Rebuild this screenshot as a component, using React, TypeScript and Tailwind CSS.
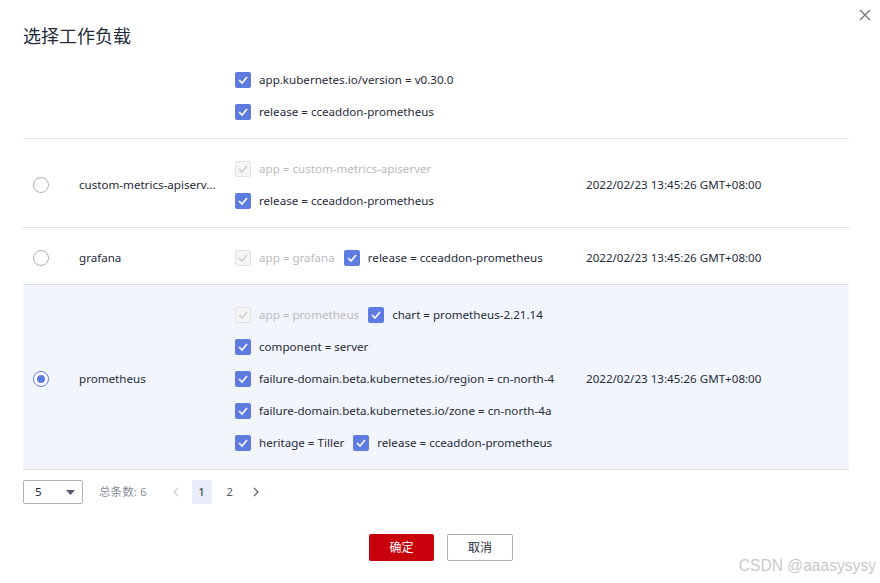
import React from "react";

type Label = { text: string; disabled?: boolean };

function Check({ disabled }: { disabled?: boolean }) {
  if (disabled) {
    return (
      <span className="flex h-4 w-4 shrink-0 items-center justify-center rounded-[2px] border border-[#dfe1e6] bg-[#f5f5f6]">
        <svg width="10" height="8" viewBox="0 0 10 8" fill="none">
          <path d="M1 4l3 3 5-6" stroke="#cbcdd2" strokeWidth="1.5" />
        </svg>
      </span>
    );
  }
  return (
    <span className="flex h-4 w-4 shrink-0 items-center justify-center rounded-[2px] bg-[#5e7ce0]">
      <svg width="10" height="8" viewBox="0 0 10 8" fill="none">
        <path d="M1 4l3 3 5-6" stroke="#ffffff" strokeWidth="1.6" />
      </svg>
    </span>
  );
}

function Tag({ l }: { l: Label }) {
  return (
    <span className="flex items-center gap-2 mr-[9px]">
      <Check disabled={l.disabled} />
      <span className={l.disabled ? "text-[#b8bac0]" : "text-[#252b3a]"}>{l.text}</span>
    </span>
  );
}

function Radio({ checked }: { checked?: boolean }) {
  if (checked) {
    return (
      <span className="flex h-4 w-4 items-center justify-center rounded-full border border-[#5e7ce0] bg-white">
        <span className="h-2 w-2 rounded-full bg-[#5e7ce0]" />
      </span>
    );
  }
  return <span className="block h-4 w-4 rounded-full border border-[#adb0b8] bg-white" />;
}

function Row({
  name,
  lines,
  checked,
  date,
  radio = true,
}: {
  name?: string;
  lines: Label[][];
  checked?: boolean;
  date?: string;
  radio?: boolean;
}) {
  return (
    <div className={`flex items-center border-b border-[#dfe1e6] pt-[14px] pb-[10px] ${checked ? "bg-[#f2f5fc]" : "bg-white"}`}>
      <div className="flex w-[56px] shrink-0 justify-start pl-[10px]">{radio ? <Radio checked={checked} /> : null}</div>
      <div className="w-[156px] shrink-0 truncate text-[#252b3a]">{name}</div>
      <div className="w-[351px] shrink-0">
        {lines.map((ln, i) => (
          <div key={i} className="flex h-8 items-center">
            {ln.map((l, j) => (
              <Tag key={j} l={l} />
            ))}
          </div>
        ))}
      </div>
      <div className="text-[#252b3a]">{date}</div>
    </div>
  );
}

export default function App() {
  const date = "2022/02/23 13:45:26 GMT+08:00";
  return (
    <div
      className="relative h-[583px] w-[880px] overflow-hidden bg-white text-[11.6px] text-[#252b3a]"
      style={{ fontFamily: '"Noto Sans", "Noto Sans CJK SC", sans-serif' }}
    >
      <div className="flex items-start justify-between pl-[23px] pr-[9px]">
        <div className="pt-[24px] text-[18px] leading-6 text-[#252b3a]">选择工作负载</div>
        <svg className="mt-[9px]" width="12" height="12" viewBox="0 0 12 12" fill="none">
          <path d="M1 1l10 10M11 1L1 11" stroke="#71757f" strokeWidth="1.4" />
        </svg>
      </div>

      <div className="mx-[23px] mt-[2px] w-[826px]">
        <Row
          radio={false}
          lines={[
            [{ text: "app.kubernetes.io/version = v0.30.0" }],
            [{ text: "release = cceaddon-prometheus" }],
          ]}
        />
        <Row
          name="custom-metrics-apiserv..."
          date={date}
          lines={[
            [{ text: "app = custom-metrics-apiserver", disabled: true }],
            [{ text: "release = cceaddon-prometheus" }],
          ]}
        />
        <Row
          name="grafana"
          date={date}
          lines={[[{ text: "app = grafana", disabled: true }, { text: "release = cceaddon-prometheus" }]]}
        />
        <Row
          name="prometheus"
          checked
          date={date}
          lines={[
            [{ text: "app = prometheus", disabled: true }, { text: "chart = prometheus-2.21.14" }],
            [{ text: "component = server" }],
            [{ text: "failure-domain.beta.kubernetes.io/region = cn-north-4" }],
            [{ text: "failure-domain.beta.kubernetes.io/zone = cn-north-4a" }],
            [{ text: "heritage = Tiller" }, { text: "release = cceaddon-prometheus" }],
          ]}
        />

        <div className="mt-[10px] flex items-center">
          <div className="flex h-6 w-[60px] items-center justify-between rounded-[2px] border border-[#adb0b8] pl-[11px] pr-[7px]">
            <span>5</span>
            <svg width="9" height="5" viewBox="0 0 9 5">
              <path d="M0 0h9L4.5 5z" fill="#575d6c" />
            </svg>
          </div>
          <span className="ml-[16px] text-[#8a8e99]">总条数: 6</span>
          <svg className="ml-[26px]" width="6" height="10" viewBox="0 0 6 10" fill="none">
            <path d="M5 1L1 5l4 4" stroke="#cbcdd2" strokeWidth="1.2" />
          </svg>
          <span className="ml-[13px] flex h-6 w-5 items-center justify-center rounded-[2px] bg-[#e9edfa] text-[#252b3a]">1</span>
          <span className="ml-[12px] flex h-6 w-3 items-center justify-center text-[#575d6c]">2</span>
          <svg className="ml-[17px]" width="6" height="10" viewBox="0 0 6 10" fill="none">
            <path d="M1 1l4 4-4 4" stroke="#575d6c" strokeWidth="1.2" />
          </svg>
        </div>
      </div>

      <div className="mt-[30px] flex justify-center gap-[13px] pl-[2px]">
        <button className="flex h-[27px] w-[65px] items-center justify-center rounded-[2px] bg-[#c7000b] text-[12px] text-white">确定</button>
        <button className="flex h-[27px] w-[66px] items-center justify-center rounded-[2px] border border-[#adb0b8] bg-white text-[12px] text-[#252b3a]">取消</button>
      </div>

      <div
        className="absolute bottom-[6px] right-[4px] text-[15.6px] text-[#c8c8c8]"
        style={{ fontFamily: '"Liberation Sans", sans-serif' }}
      >
        CSDN @aaasysysy
      </div>
    </div>
  );
}
